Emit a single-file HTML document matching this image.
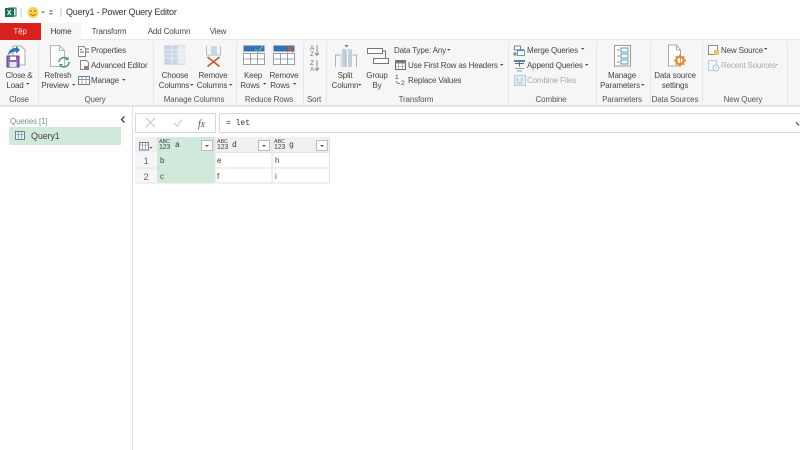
<!DOCTYPE html>
<html><head><meta charset="utf-8">
<style>
html,body{margin:0;padding:0;background:#fff}
#p{position:relative;width:800px;height:450px;overflow:hidden;background:#fff;font-family:"Liberation Sans","Noto Sans CJK SC",sans-serif;font-size:8px;letter-spacing:-.15px;color:#444;filter:blur(.3px)}
.t{position:absolute;white-space:nowrap;line-height:10px;margin-top:1px}
.c{transform:translateX(-50%);text-align:center}
.b{position:absolute}
.g{color:#555}
.dis{color:#aaa}
.m{font-family:"Liberation Mono",monospace;font-size:8px;letter-spacing:0;color:#333}
svg{position:absolute;left:0;top:0}
</style></head><body><div id="p">
<div class="b" style="left:0;top:40px;width:800px;height:65px;background:#f6f6f6"></div>
<div class="b" style="left:0;top:105px;width:800px;height:2px;background:#e6e6e6"></div>
<div class="b" style="left:0;top:23px;width:41px;height:17px;background:#d8201c"></div>
<div class="b" style="left:41px;top:23px;width:40px;height:18px;background:#f6f6f6;border-radius:1px 1px 0 0"></div>
<div class="b" style="left:81px;top:39px;width:719px;height:1px;background:#e8e8e8"></div>
<div class="b" style="left:132px;top:107px;width:1px;height:343px;background:#e0e0e0"></div>
<div class="b" style="left:9px;top:127px;width:112px;height:18px;background:#cfeadb"></div>

<svg width="800" height="450" viewBox="0 0 800 450" fill="none">
<!-- title bar -->
<rect x="9" y="8" width="7" height="8" fill="#fff" stroke="#1f7a45"/>
<rect x="5" y="8" width="9" height="9" fill="#17774a"/>
<path d="M7.500 10l3.500 5M11 10l-3.500 5" stroke="#fff" stroke-width="1"/>
<path d="M21 8v9M61 8v9" stroke="#c8c8c8"/>
<circle cx="33" cy="12.500" r="5.500" fill="#f7d34b"/>
<circle cx="31" cy="11" r=".8" fill="#6b5a10"/><circle cx="35" cy="11" r=".8" fill="#6b5a10"/>
<path d="M30 14q3 2.500 6 0" stroke="#7a6412" stroke-width=".8"/>
<path d="M41 11.500h4l-2 2zM49 13h4l-2 2z" fill="#777"/><path d="M49 11h4" stroke="#666"/>

<!-- group separators -->
<path d="M38.500 42v61M153.500 42v61M236.500 42v61M303.500 42v61M326.500 42v61M508.500 42v61M596.500 42v61M650.500 42v61M702.500 42v61M787.500 42v61" stroke="#e6e6e6"/>

<!-- close & load -->
<path d="M13 46h8l4 4v15h-12z" fill="#fff" stroke="#aaa"/>
<path d="M8 55q1-7 8-7v-2l4 4-4 3.500v-2q-4 0-8 3.500z" fill="#2e75b6"/>
<rect x="7" y="56" width="12" height="11" fill="#8e6bb0" stroke="#5f3f86"/>
<rect x="10" y="56.500" width="6" height="3.500" fill="#fff"/><rect x="9.500" y="62" width="7" height="5" fill="#e9e2f0"/>
<!-- refresh -->
<path d="M50.500 45.500h9l5 5v16h-14z" fill="#fff" stroke="#b5b5b5"/><path d="M59.500 45.500v5h5" stroke="#b5b5b5"/>
<path d="M59 62a5 5 0 0 1 8.500-3M69 62a5 5 0 0 1-8.500 3.500" stroke="#4f9d6c" stroke-width="1.500"/>
<path d="M68.500 56.500v3.500h-3.500z" fill="#4f9d6c"/><path d="M59.500 67.500v-3.500h3.500z" fill="#4f9d6c"/>
<!-- small query icons -->
<path d="M78.500 46.500h5l2 2v8h-7z" fill="#fff" stroke="#888"/><path d="M80 49.500h2M80 52h4M86 49h3M86 52h3" stroke="#666"/>
<path d="M80.500 60.500h6l2 2v7h-8z" fill="#fff" stroke="#888"/><rect x="84" y="66" width="4" height="3" fill="#888"/>
<rect x="78.500" y="76.500" width="11" height="8" fill="#fff" stroke="#6b7f99"/><path d="M78.500 79.500h11M82 76.500v8M86 76.500v8" stroke="#6b7f99" stroke-width=".7"/>
<!-- choose columns -->
<rect x="165" y="46" width="20" height="18" fill="#c9d6e6" stroke="#b9c8da"/>
<path d="M165 50h20M165 54h20M165 58h20M172 46v18M178 46v18" stroke="#f0f4f8" stroke-width=".8"/>
<rect x="178.500" y="46" width="7" height="18" fill="#f7f7f7" opacity=".7"/>
<!-- remove columns -->
<path d="M206.500 46v9h14v-9M212 46v9M216 46v9" stroke="#a7bfd8" stroke-width="1"/>
<rect x="211" y="46" width="5" height="10" fill="#c9d6e6"/>
<path d="M207.500 57l12 9.500M219.500 57l-12 9.500" stroke="#c9533a" stroke-width="1.600"/>
<!-- keep rows -->
<rect x="243.500" y="45.500" width="21" height="6" fill="#3a70b0"/>
<rect x="243.500" y="53.500" width="21" height="11" fill="#fff" stroke="#7f8c9b" stroke-width=".8"/>
<path d="M243.500 59h21M250.500 53.500v11M257.500 53.500v11" stroke="#7f8c9b" stroke-width=".8"/>
<path d="M255 49l3 3 5-6" stroke="#5ab0a0" stroke-width="1.400"/>
<!-- remove rows -->
<rect x="273.500" y="45.500" width="21" height="6" fill="#3a70b0"/>
<rect x="273.500" y="53.500" width="21" height="11" fill="#fff" stroke="#7f8c9b" stroke-width=".8"/>
<path d="M273.500 59h21M280.500 53.500v11M287.500 53.500v11" stroke="#7f8c9b" stroke-width=".8"/>
<path d="M287 46l6 6M293 46l-6 6" stroke="#c65d4a" stroke-width="1.300"/>
<!-- sort -->
<text x="310" y="50" font-size="6.500" fill="#3d6fa5" font-family="Liberation Sans">A</text>
<text x="310" y="56" font-size="6.500" fill="#777" font-family="Liberation Sans">Z</text>
<path d="M317 45v10M315 53l2 2.500 2-2.500" stroke="#777" stroke-width=".8"/>
<text x="310" y="65" font-size="6.500" fill="#3d6fa5" font-family="Liberation Sans">Z</text>
<text x="310" y="71" font-size="6.500" fill="#777" font-family="Liberation Sans">A</text>
<path d="M317 60v10M315 68l2 2.500 2-2.500" stroke="#777" stroke-width=".8"/>
<!-- split column -->
<rect x="342" y="49" width="4" height="18" fill="#c3d0df"/><rect x="348" y="49" width="4" height="18" fill="#c3d0df"/><rect x="340" y="54" width="2" height="13" fill="#e2e8ef"/>
<path d="M335.500 67v-12h5M356.500 67v-12h-4M346 50v17" stroke="#aaa" stroke-width=".9"/>
<path d="M344.500 45h4l-2 2.500z" fill="#777"/>
<!-- group by -->
<rect x="367.500" y="48.500" width="15" height="5" fill="#fff" stroke="#777"/><rect x="373.500" y="58.500" width="15" height="5" fill="#fff" stroke="#777"/>
<path d="M382.500 51h3v7.500" stroke="#777"/>
<!-- transform small -->
<rect x="395.500" y="60.500" width="10" height="9" fill="#fff" stroke="#667"/><path d="M395.500 63.500h10M398.500 60.500v9M402.500 60.500v9M395.500 66.500h10" stroke="#889" stroke-width=".6"/>
<rect x="395" y="60" width="11" height="3" fill="#778"/>
<text x="395" y="79" font-size="6.500" fill="#444" font-family="Liberation Sans">1</text>
<text x="401" y="85" font-size="6.500" fill="#444" font-family="Liberation Sans">2</text>
<path d="M396 81q1 3 4 2.500" stroke="#3d7fc1" stroke-width=".9"/>
<!-- combine -->
<rect x="514.500" y="46" width="6" height="4" fill="#fff" stroke="#667" stroke-width=".8"/>
<rect x="517.500" y="50.500" width="7" height="5" fill="#fff" stroke="#4d7fb5" stroke-width=".8"/><path d="M517 50h7" stroke="#4d7fb5" stroke-width="1.300"/>
<path d="M513.500 52.500h3v3h-3z" fill="#5a9c76"/>
<path d="M515 60.500h9M519.500 60.500v6M515 63.500h9" stroke="#667" stroke-width="1"/>
<path d="M515 68.500h9M517 71h5" stroke="#7aa" stroke-width="1"/><rect x="514" y="60" width="11" height="2" fill="#5a80a8"/>
<rect x="514.500" y="75.500" width="11" height="10" fill="#e4ebf3" stroke="#b8cde2"/><path d="M517 78v3M522 78v3M517 83h5" stroke="#9db7d1"/>
<!-- parameters -->
<rect x="614.500" y="45.500" width="16" height="20.500" fill="#fff" stroke="#9a9a9a"/>
<rect x="621" y="48" width="7" height="4" stroke="#5d96b5"/><rect x="621" y="54" width="7" height="4" stroke="#5d96b5"/><rect x="621" y="60" width="7" height="4" stroke="#5d96b5"/>
<path d="M617 50h2.500M617 56h2.500M617 62h2.500" stroke="#888"/>
<!-- data source -->
<path d="M668.500 45h8l4 5v16h-12z" fill="#fff" stroke="#aaa"/><path d="M676.500 45v5h4" stroke="#aaa"/>
<circle cx="680" cy="60.500" r="3.800" stroke="#e08a2e" stroke-width="2.300"/>
<path d="M680 54.500v2.500M680 64v2.500M674 60.500h2.500M683.500 60.500h2.500M675.800 56.300l1.700 1.700M682.500 63l1.700 1.700M684.200 56.300l-1.700 1.700M677.500 63l-1.700 1.700" stroke="#e08a2e" stroke-width="1.500"/>
<!-- new source -->
<rect x="708.500" y="45.500" width="9" height="9" fill="#fff" stroke="#888"/>
<rect x="714" y="50" width="5" height="5" fill="#e9c46a"/>
<rect x="708.500" y="60.500" width="8" height="10" fill="#f3f6fa" stroke="#b8cde2"/><circle cx="716" cy="68" r="3" fill="#fff" stroke="#a8bfd6"/>
<path d="M716 66.500v1.500h1.500" stroke="#a8bfd6" stroke-width=".7"/>

<!-- dropdown carets -->
<path d="M26 83h3.500l-1.750 1.800zM72 84h3.500l-1.750 1.800zM122 79h3.500l-1.750 1.800zM190 84h3.500l-1.750 1.800zM229 84h3.500l-1.750 1.800zM263 83h3.500l-1.750 1.800zM293 83h3.500l-1.750 1.800zM358 84h3.500l-1.750 1.800zM447 49h3.500l-1.750 1.800zM500 64h3.500l-1.750 1.800zM581 48h3.500l-1.750 1.800zM585 64h3.500l-1.750 1.800zM641 84h3.500l-1.750 1.800zM764 48h3.500l-1.750 1.800z" fill="#444"/>
<path d="M775 64h3.500l-1.750 1.800z" fill="#bbb"/>

<!-- sidebar -->
<path d="M124.500 116.500l-3 3 3 3" stroke="#444" stroke-width="1.300"/>
<rect x="15.500" y="131.500" width="9" height="8" fill="#e8f3ee" stroke="#6b7f99"/><path d="M15.500 134.500h9M18.500 131.500v8M21.500 131.500v8" stroke="#6b7f99" stroke-width=".6"/>

<!-- formula bar -->
<rect x="135.500" y="113.500" width="80" height="19" fill="#fff" stroke="#d8d8d8"/>
<rect x="219.500" y="113.500" width="590" height="19" fill="#fff" stroke="#d8d8d8"/>
<path d="M146 118l9 9M155 118l-9 9" stroke="#c4c4c4" stroke-width="1"/>
<path d="M174 123l3 3.500 5-7" stroke="#c4c4c4" stroke-width="1"/>
<text x="198" y="127" font-size="10" font-style="italic" fill="#555" font-family="Liberation Serif">fx</text>
<path d="M796 122l3 3.500" stroke="#555" stroke-width="1.300"/>

<!-- table -->
<rect x="135" y="137" width="194.500" height="15.500" fill="#f0f0f0"/>
<rect x="135" y="152.500" width="22" height="30" fill="#f6f6f6"/>
<rect x="157" y="137" width="58" height="46" fill="#cfeadb"/>
<path d="M157.500 152.500h172M135 168h194.500M135 183h194.500M329.500 137v46M272 137v46M215 137v46" stroke="#e2e2e2" stroke-width="1"/>
<rect x="139.500" y="142.500" width="9" height="7.500" fill="#fff" stroke="#6b7f99"/><path d="M139.500 145h9M142.500 142.500v7.500M145.500 142.500v7.500" stroke="#6b7f99" stroke-width=".6"/>
<path d="M149.500 147h3l-1.500 1.700z" fill="#555"/>
<rect x="201.500" y="140.500" width="11" height="10" fill="#fff" stroke="#bbb"/><path d="M205 145h4l-2 2z" fill="#555"/>
<rect x="258.500" y="140.500" width="11" height="10" fill="#fff" stroke="#bbb"/><path d="M262 145h4l-2 2z" fill="#555"/>
<rect x="316.500" y="140.500" width="11" height="10" fill="#fff" stroke="#bbb"/><path d="M320 145h4l-2 2z" fill="#555"/>
</svg>

<div class="t" style="left:66px;top:6px;font-size:9px;letter-spacing:-.2px;color:#333">Query1 - Power Query Editor</div>
<div class="t c" style="left:20px;top:26px;font-size:8px;color:#fbe5e0">Tệp</div>
<div class="t c" style="left:61px;top:26px;color:#333">Home</div>
<div class="t c" style="left:109px;top:26px">Transform</div>
<div class="t c" style="left:169px;top:26px">Add Column</div>
<div class="t c" style="left:218px;top:26px">View</div>

<div class="t c" style="left:19px;top:70px">Close &amp;</div>
<div class="t c" style="left:15px;top:80px">Load</div>
<div class="t c" style="left:58px;top:70px">Refresh</div>
<div class="t c" style="left:55px;top:80px">Preview</div>
<div class="t" style="left:91px;top:45px">Properties</div>
<div class="t" style="left:91px;top:60px">Advanced Editor</div>
<div class="t" style="left:91px;top:75px">Manage</div>
<div class="t c" style="left:175px;top:70px">Choose</div>
<div class="t c" style="left:174px;top:80px">Columns</div>
<div class="t c" style="left:213px;top:70px">Remove</div>
<div class="t c" style="left:212px;top:80px">Columns</div>
<div class="t c" style="left:253px;top:70px">Keep</div>
<div class="t c" style="left:250px;top:80px">Rows</div>
<div class="t c" style="left:284px;top:70px">Remove</div>
<div class="t c" style="left:280px;top:80px">Rows</div>
<div class="t c" style="left:345px;top:70px">Split</div>
<div class="t c" style="left:345px;top:80px">Column</div>
<div class="t c" style="left:377px;top:70px">Group</div>
<div class="t c" style="left:377px;top:80px">By</div>
<div class="t" style="left:394px;top:45px">Data Type: Any</div>
<div class="t" style="left:408px;top:60px">Use First Row as Headers</div>
<div class="t" style="left:408px;top:75px">Replace Values</div>
<div class="t" style="left:527px;top:45px">Merge Queries</div>
<div class="t" style="left:527px;top:60px">Append Queries</div>
<div class="t dis" style="left:527px;top:75px">Combine Files</div>
<div class="t c" style="left:622px;top:70px">Manage</div>
<div class="t c" style="left:620px;top:80px">Parameters</div>
<div class="t c" style="left:675px;top:70px">Data source</div>
<div class="t c" style="left:675px;top:80px">settings</div>
<div class="t" style="left:721px;top:45px">New Source</div>
<div class="t dis" style="left:721px;top:60px">Recent Sources</div>

<div class="t c g" style="left:19px;top:94px">Close</div>
<div class="t c g" style="left:95px;top:94px">Query</div>
<div class="t c g" style="left:194px;top:94px">Manage Columns</div>
<div class="t c g" style="left:269px;top:94px">Reduce Rows</div>
<div class="t c g" style="left:314px;top:94px">Sort</div>
<div class="t c g" style="left:416px;top:94px">Transform</div>
<div class="t c g" style="left:551px;top:94px">Combine</div>
<div class="t c g" style="left:622px;top:94px">Parameters</div>
<div class="t c g" style="left:675px;top:94px">Data Sources</div>
<div class="t c g" style="left:743px;top:94px">New Query</div>

<div class="t" style="left:10px;top:116px;color:#7a8a9a;font-size:8px">Queries [1]</div>
<div class="t" style="left:31px;top:130px;font-size:9px;color:#444">Query1</div>

<div class="t m" style="left:226px;top:118px">= let</div>

<div class="t" style="left:159px;top:138px;font-size:5.500px;line-height:6px;color:#444">ABC<br><span style="font-size:7px">123</span></div>
<div class="t" style="left:217px;top:138px;font-size:5.500px;line-height:6px;color:#444">ABC<br><span style="font-size:7px">123</span></div>
<div class="t" style="left:274px;top:138px;font-size:5.500px;line-height:6px;color:#444">ABC<br><span style="font-size:7px">123</span></div>
<div class="t m" style="left:175px;top:140px">a</div>
<div class="t m" style="left:232px;top:140px">d</div>
<div class="t m" style="left:289px;top:140px">g</div>
<div class="t c" style="left:146px;top:155px;font-size:9px;color:#666">1</div>
<div class="t c" style="left:146px;top:171px;font-size:9px;color:#666">2</div>
<div class="t" style="left:160px;top:155px">b</div>
<div class="t" style="left:217px;top:155px">e</div>
<div class="t" style="left:275px;top:155px">h</div>
<div class="t" style="left:160px;top:171px">c</div>
<div class="t" style="left:217px;top:171px">f</div>
<div class="t" style="left:275px;top:171px">i</div>
</div></body></html>
